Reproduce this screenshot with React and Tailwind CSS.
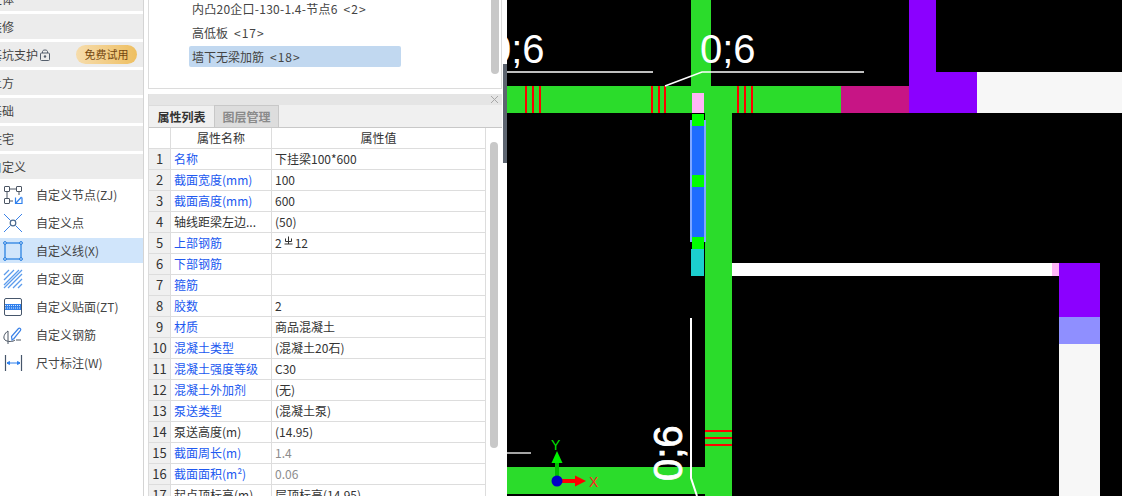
import React from 'react';

const FONT = '"Noto Sans CJK SC", "Liberation Sans", sans-serif';

const sections = ['主体', '装修', '基坑支护', '土方', '基础', '住宅', '自定义'];

const IconNode = () => (
    <svg width="24" height="24" viewBox="0 0 24 24" fill="none">
        <g stroke="#4b5563" strokeWidth="1">
            <rect x="3.5" y="3.5" width="5" height="5" rx="0.5" />
            <rect x="15.5" y="3.5" width="5" height="5" rx="0.5" />
            <rect x="3.5" y="15.5" width="5" height="5" rx="0.5" />
            <path d="M8.5 6H15.5M6 8.5V15.5M8.5 18H12M18 8.5V12" />
        </g>
        <path d="M14.5 14.5V20.5H21V14.5M15 20L20.5 14" stroke="#2f80ed" strokeWidth="1.2" />
    </svg>
);

const IconPoint = () => (
    <svg width="24" height="24" viewBox="0 0 24 24" fill="none">
        <path d="M3 3L9.5 9.5M14.5 14.5L21 21M21 3L14.5 9.5M9.5 14.5L3 21" stroke="#3b82e8" strokeWidth="1" />
        <circle cx="12" cy="12" r="2.8" stroke="#4b6a8f" strokeWidth="1.2" />
    </svg>
);

const IconLine = () => (
    <svg width="24" height="24" viewBox="0 0 24 24" fill="none">
        <rect x="4" y="4" width="16" height="16" stroke="#1f7ae0" strokeWidth="1.2" />
        <g fill="#d0e5fb" stroke="#1f7ae0">
            <circle cx="4" cy="4" r="1.4" />
            <circle cx="20" cy="4" r="1.4" />
            <circle cx="4" cy="20" r="1.4" />
            <circle cx="20" cy="20" r="1.4" />
        </g>
    </svg>
);

const IconFace = () => (
    <svg width="24" height="24" viewBox="0 0 24 24" fill="none">
        <path d="M3 8L8 3M3 13L13 3M3 18L18 3M3 21L21 3M7 21L21 7M12 21L21 12M17 21L21 17" stroke="#5b9bec" strokeWidth="1.3" />
    </svg>
);

const IconPatch = () => (
    <svg width="24" height="24" viewBox="0 0 24 24" fill="none">
        <rect x="3.5" y="3.5" width="17" height="17" rx="1.5" stroke="#46566b" strokeWidth="1" />
        <rect x="4" y="9" width="16" height="6" fill="#2f80ed" />
        <path d="M4 10.5H20M4 13H20" stroke="#ffffff" strokeWidth="0.8" strokeDasharray="1 1" />
    </svg>
);

const IconRebar = () => (
    <svg width="24" height="24" viewBox="0 0 24 24" fill="none">
        <path d="M11 17L10.5 13.5L17.5 5.5C18.5 4.5 20.5 6 19.5 7.5L13 15.5L11 17Z" stroke="#3b82e8" strokeWidth="1.2" />
        <path d="M15 17H20M7 8C3.5 10 1.5 15 4 17C6.5 19 12 19 14 17M7 8V21" stroke="#4b5563" strokeWidth="1" />
    </svg>
);

const IconDim = () => (
    <svg width="24" height="24" viewBox="0 0 24 24" fill="none">
        <path d="M4.5 4V20M20.5 4V20" stroke="#46566b" strokeWidth="1.2" />
        <path d="M6 12H19M6 12L8.5 10.5V13.5ZM19 12L16.5 10.5V13.5Z" stroke="#2f80ed" fill="#2f80ed" strokeWidth="1" />
    </svg>
);

const tools = [
    { name: '自定义节点(ZJ)', icon: <IconNode /> },
    { name: '自定义点', icon: <IconPoint /> },
    { name: '自定义线(X)', icon: <IconLine />, active: true },
    { name: '自定义面', icon: <IconFace /> },
    { name: '自定义贴面(ZT)', icon: <IconPatch /> },
    { name: '自定义钢筋', icon: <IconRebar /> },
    { name: '尺寸标注(W)', icon: <IconDim /> },
];

const RebarMark = () => (
    <svg width="9" height="11" viewBox="0 0 9 11" fill="none" className="inline-block mx-[2px] -mt-[3px]">
        <path d="M4.5 0.5V8M0.5 8H8.5M1.5 2.5V5.5H7.5V2.5" stroke="#333333" strokeWidth="1" />
    </svg>
);

const rows = [
    { name: '名称', value: '下挂梁100*600', blue: true },
    { name: '截面宽度(mm)', value: '100', blue: true },
    { name: '截面高度(mm)', value: '600', blue: true },
    { name: '轴线距梁左边...', value: '(50)' },
    { name: '上部钢筋', value: <>2<RebarMark />12</>, blue: true },
    { name: '下部钢筋', value: '', blue: true },
    { name: '箍筋', value: '', blue: true },
    { name: '胶数', value: '2', blue: true },
    { name: '材质', value: '商品混凝土', blue: true },
    { name: '混凝土类型', value: '(混凝土20石)', blue: true },
    { name: '混凝土强度等级', value: 'C30', blue: true },
    { name: '混凝土外加剂', value: '(无)', blue: true },
    { name: '泵送类型', value: '(混凝土泵)', blue: true },
    { name: '泵送高度(m)', value: '(14.95)' },
    { name: '截面周长(m)', value: '1.4', blue: true, muted: true },
    { name: '截面面积(m²)', value: '0.06', blue: true, muted: true },
    { name: '起点顶标高(m)', value: '层顶标高(14.95)' },
];

const Sidebar = () => (
    <div className="w-[144px] shrink-0 overflow-hidden border-r border-[#d4d4d4] flex flex-col gap-[3px] -mt-[14px] h-[510px]">
        {sections.map(name => (
            <div key={name} className="h-[25px] shrink-0 bg-[#ececec] flex items-center text-[12px] text-[#444] whitespace-nowrap">
                <span className="-ml-[10px]">{name}</span>
                {name === '基坑支护' && (
                    <>
                        <svg width="10" height="12" viewBox="0 0 10 12" fill="none" className="ml-[2px]">
                            <rect x="0.5" y="4" width="9" height="7.5" rx="1" stroke="#555e6c" />
                            <path d="M2.5 4V2.5C2.5 0.5 7.5 0.5 7.5 2.5V4" stroke="#555e6c" />
                            <circle cx="5" cy="7.5" r="1.2" fill="#555e6c" />
                        </svg>
                        <span className="ml-[26px] w-[61px] h-[19px] rounded-full bg-gradient-to-r from-[#f6dcab] to-[#eebf60] text-[#74470f] text-[11px] flex items-center justify-center">
                            免费试用
                        </span>
                    </>
                )}
            </div>
        ))}
        {tools.map(tool => (
            <div
                key={tool.name}
                className={`h-[25px] shrink-0 flex items-center text-[12px] text-[#444] whitespace-nowrap pl-[1px] ${tool.active ? 'bg-[#d0e5fb]' : ''}`}
            >
                <span className="w-[24px] h-[24px] shrink-0 flex">{tool.icon}</span>
                <span className="ml-[11px]">{tool.name}</span>
            </div>
        ))}
    </div>
);

const TreePanel = () => (
    <div className="h-[89px] shrink-0 border border-t-0 border-[#dcdcdc] flex overflow-hidden">
        <div className="flex-1 flex flex-col gap-[3px] -mt-[2px] pl-[40px] text-[12px] text-[#444]">
            <div className="h-[21px] shrink-0 flex items-center pl-[3px] tracking-[0.25px]">内凸20企口-130-1.4-节点6<span className="ml-[6px] tracking-[1px]">&lt;2&gt;</span></div>
            <div className="h-[21px] shrink-0 flex items-center pl-[3px]">高低板<span className="ml-[6px] tracking-[1px]">&lt;17&gt;</span></div>
            <div className="h-[21px] w-[212px] shrink-0 flex items-center pl-[3px] rounded-[2px] bg-[#c1d8f0]">墙下无梁加筋<span className="ml-[6px] tracking-[1px]">&lt;18&gt;</span></div>
        </div>
        <div className="w-[8px] h-[74px] mr-[2px] rounded-b-[4px] bg-[#c8c8c8]" />
    </div>
);

const PropertyTable = () => (
    <div className="flex-1 min-h-0 border-l border-[#dcdcdc] flex flex-col overflow-hidden">
        <div className="h-[11px] shrink-0 bg-[#e5e5e5] flex items-center justify-end pr-[3px]">
            <svg width="9" height="9" viewBox="0 0 9 9" fill="none">
                <path d="M1 1L8 8M8 1L1 8" stroke="#a8a8a8" strokeWidth="1" />
            </svg>
        </div>
        <div className="h-[23px] shrink-0 bg-[#f0f0f0] border-b border-[#c8c8c8] flex text-[12px] font-bold">
            <div className="w-[65px] flex items-center justify-center text-[#333] border-t border-[#dcdcdc]">属性列表</div>
            <div className="w-[65px] flex items-center justify-center text-[#8a8a8a] bg-[#dddddd] border border-b-0 border-[#c8c8c8]">图层管理</div>
        </div>
        <div className="flex-1 flex min-h-0">
            <div className="w-[337px] shrink-0 text-[12px] text-[#333]">
                <div className="h-[21px] grid grid-cols-[22px_101px_214px] border-b border-[#dddddd]">
                    <div className="border-r border-[#dddddd]" />
                    <div className="border-r border-[#dddddd] flex items-center justify-center">属性名称</div>
                    <div className="border-r border-[#dddddd] flex items-center justify-center">属性值</div>
                </div>
                {rows.map((row, i) => (
                    <div key={row.name} className="h-[21px] grid grid-cols-[22px_101px_214px] border-b border-[#dddddd]">
                        <div className="bg-[#f0f0f0] border-r border-[#dddddd] flex items-center justify-center text-[13px]">{i + 1}</div>
                        <div className={`border-r border-[#dddddd] flex items-center pl-[3px] whitespace-nowrap ${row.blue ? 'text-[#2058f0]' : ''}`}>{row.name}</div>
                        <div className={`border-r border-[#dddddd] flex items-center pl-[3px] whitespace-nowrap ${row.muted ? 'text-[#8c8c8c]' : ''}`}>{row.value}</div>
                    </div>
                ))}
            </div>
            <div className="w-[8px] ml-[4px] mt-[14px] h-[306px] rounded-full bg-[#c8c8c8]" />
        </div>
    </div>
);

const Canvas = () => (
    <div className="flex-1 h-full bg-black overflow-hidden">
        <svg className="block w-full h-full" viewBox="507 0 615 496" shapeRendering="crispEdges">
            <g fill="#2bdc2b">
                <rect x="691" y="0" width="20" height="86" />
                <rect x="507" y="86" width="334" height="27" />
                <rect x="705" y="113" width="27" height="383" />
                <rect x="507" y="467" width="198" height="27" />
            </g>
            <rect x="841" y="86" width="68" height="27" fill="#c71585" />
            <path d="M909 0H936V72H977V113H909Z" fill="#8b00ff" />
            <rect x="977" y="72" width="145" height="41" fill="#f7f7f7" />

            {/* column strip beside the wall */}
            <rect x="690" y="120" width="16" height="122" fill="#7fa6ff" />
            <rect x="692" y="93" width="12" height="20" fill="#ffb6f7" />
            <rect x="692" y="114" width="12" height="12" fill="#00ff00" />
            <rect x="692" y="126" width="12" height="49" fill="#1e6cff" />
            <rect x="692" y="175" width="12" height="12" fill="#00ff00" />
            <rect x="692" y="187" width="12" height="50" fill="#1e6cff" />
            <rect x="692" y="237" width="12" height="12" fill="#00ff00" />
            <rect x="691" y="249" width="13" height="27" fill="#1ccfcf" />

            <rect x="732" y="263" width="320" height="13" fill="#ffffff" />
            <rect x="1052" y="263" width="7" height="13" fill="#ffb6f7" />
            <rect x="1059" y="263" width="41" height="54" fill="#8b00ff" />
            <rect x="1059" y="317" width="41" height="27" fill="#8f8fff" />
            <rect x="1059" y="344" width="41" height="152" fill="#f7f7f7" />

            {/* stirrups */}
            <g fill="#ff0000">
                {[525, 532, 539, 651, 658, 664, 737, 744, 751].map(x => (
                    <rect key={x} x={x} y="86" width="2" height="27" />
                ))}
                {[430, 437, 444].map(y => (
                    <rect key={y} x="705" y={y} width="27" height="2" />
                ))}
            </g>

            {/* dimension lines */}
            <g shapeRendering="auto" stroke="#ffffff" strokeWidth="1.5" fill="none">
                <path d="M507 72H653" />
                <path d="M665 86L702 72H864" />
                <path d="M691 318V478L697 496" strokeWidth="2" />
                <path d="M507 453H531" stroke="#dddddd" />
            </g>
            <g shapeRendering="auto" fill="#ffffff" fontFamily='"Liberation Sans", sans-serif' fontSize="40">
                <text x="489" y="63">0;6</text>
                <text x="700" y="63">0;6</text>
                <text transform="translate(682 481) rotate(-90)" stroke="#ffffff" strokeWidth="0.8">0;6</text>
            </g>

            {/* axis */}
            <g shapeRendering="auto">
                <rect x="555" y="460" width="4" height="18" fill="#00c000" />
                <path d="M557 451L562.5 463H551.5Z" fill="#00f000" />
                <rect x="560" y="479" width="16" height="4" fill="#ff0000" />
                <path d="M586 481L575 475.5V486.5Z" fill="#ff0000" />
                <circle cx="557" cy="481" r="5.5" fill="#0000c8" />
                <text x="551" y="450" fill="#00e000" fontSize="14" fontFamily='"Liberation Sans", sans-serif'>Y</text>
                <text x="589" y="487" fill="#ff2020" fontSize="14" fontFamily='"Liberation Sans", sans-serif'>X</text>
            </g>
        </svg>
    </div>
);

const App = () => {
    return (
        <div className="w-[1122px] h-[496px] overflow-hidden bg-white flex" style={{ fontFamily: FONT }}>
            <Sidebar />
            <div className="w-[354px] shrink-0 ml-[4px] h-full flex flex-col gap-[5px]">
                <TreePanel />
                <PropertyTable />
            </div>
            <div className="w-[4px] ml-[1px] shrink-0 flex flex-col">
                <div className="h-[64px] bg-white" />
                <div className="h-[99px] bg-[#5d6570]" />
            </div>
            <Canvas />
        </div>
    );
};

export default App;
